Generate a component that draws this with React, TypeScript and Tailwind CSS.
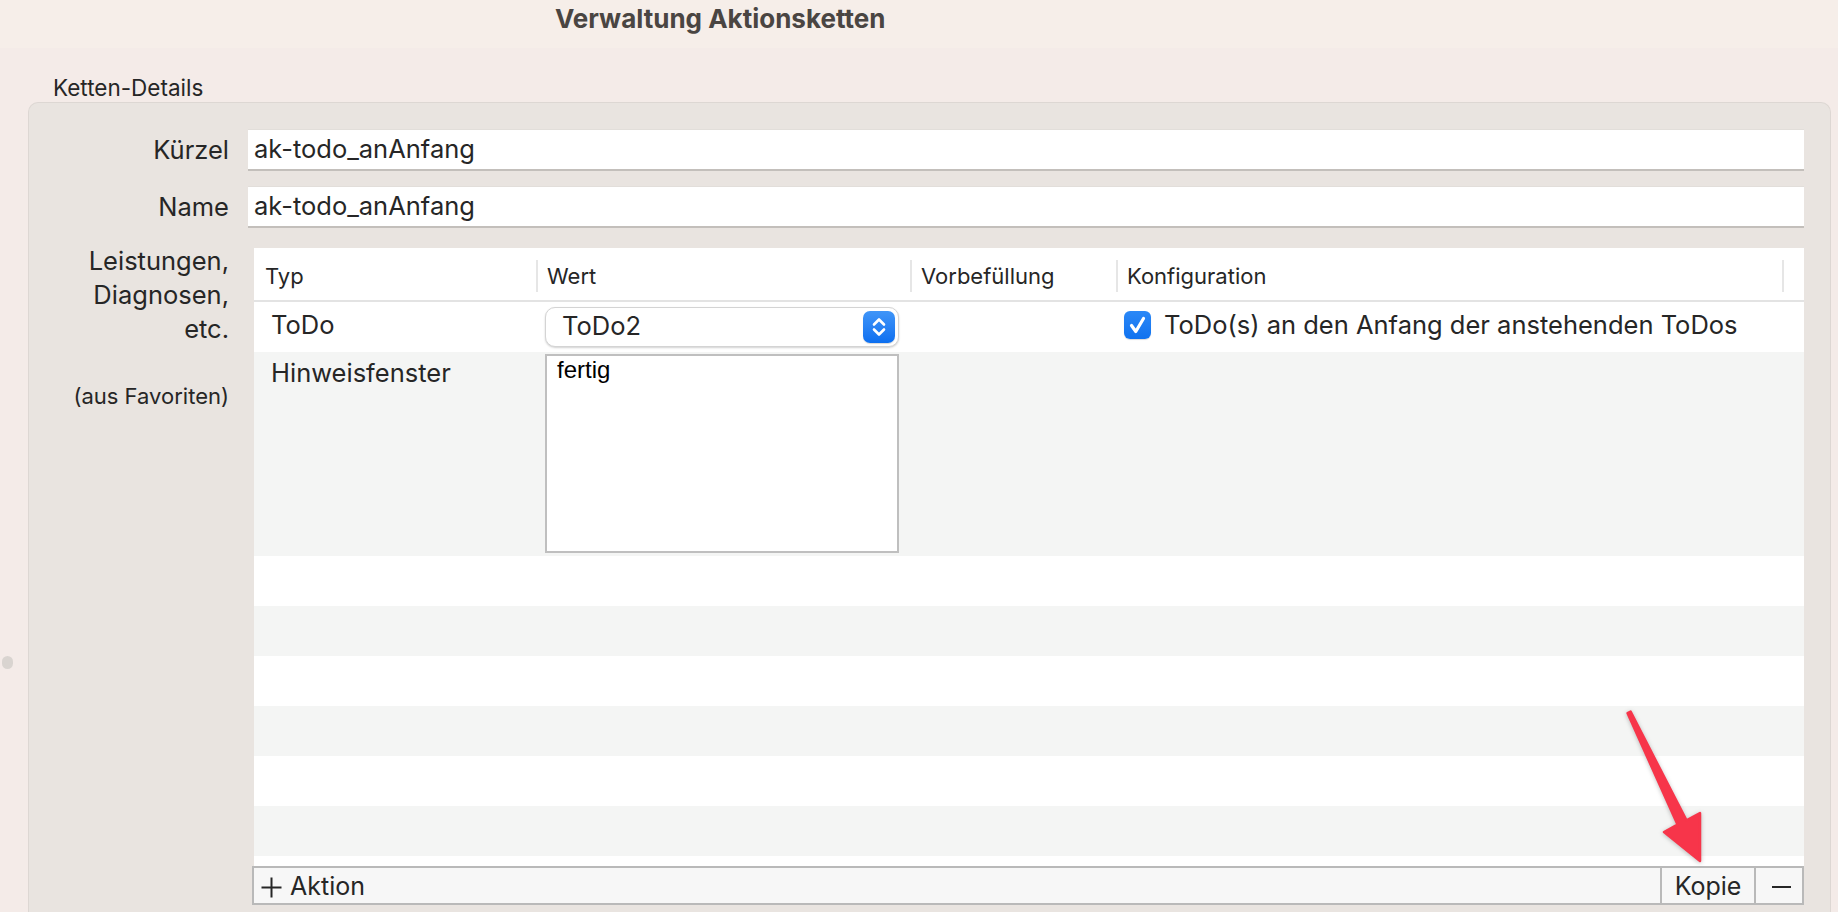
import React from "react";

function Sep() {
  return <div className="w-[2px] h-[32px] bg-[#e6e6e6] shrink-0" />;
}

function Stepper() {
  return (
    <div className="w-[32px] h-[32px] rounded-[7px] bg-gradient-to-b from-[#3f95f8] to-[#0b6ff0] flex items-center justify-center shadow-[0_1px_1px_rgba(0,0,0,0.15)]">
      <svg width="32" height="32" viewBox="0 0 32 32" fill="none">
        <path d="M11 13.5 L16 8.5 L21 13.5" stroke="white" strokeWidth="2.6" strokeLinecap="round" strokeLinejoin="round" />
        <path d="M11 18.5 L16 23.5 L21 18.5" stroke="white" strokeWidth="2.6" strokeLinecap="round" strokeLinejoin="round" />
      </svg>
    </div>
  );
}

function Checkbox() {
  return (
    <div className="w-[27px] h-[28px] rounded-[6px] bg-gradient-to-b from-[#2a88f7] to-[#0f72ef] flex items-center justify-center shrink-0 shadow-[0_1px_1px_rgba(0,0,0,0.15)]">
      <svg width="27" height="28" viewBox="0 0 27 28" fill="none">
        <path d="M7.5 14.5 L11.8 20.5 L19.5 7.5" stroke="white" strokeWidth="3.2" strokeLinecap="round" strokeLinejoin="round" />
      </svg>
    </div>
  );
}

export default function App() {
  const filler = [0, 1, 2, 3, 4, 5, 6];
  return (
    <div className="relative w-[1838px] h-[912px] overflow-hidden bg-[#f4ebe8] flex flex-col text-[#262626] font-['Inter','Noto_Sans',sans-serif]">
      {/* Title bar */}
      <div className="h-[48px] shrink-0 bg-[#f6eee9] flex items-start pt-[6px] pl-[555px]">
        <span className="text-[26px] leading-[26px] font-bold text-[#4a4542]">Verwaltung Aktionsketten</span>
      </div>

      {/* Group title */}
      <div className="shrink-0 mt-[27px] mb-[1px] pl-[53px] text-[22.5px] leading-[26px]">Ketten-Details</div>

      {/* Group box */}
      <div className="flex-1 min-h-0 ml-[28px] mr-[7px] rounded-t-[10px] bg-[#e9e4e0] border border-b-0 border-[#ddd7d3] flex flex-col pt-[26px] pb-[7px] pr-[26px]">
        <div className="flex items-center h-[42px] shrink-0">
          <div className="w-[200px] text-right text-[25.5px] leading-[30px]">Kürzel</div>
          <div className="ml-[19px] flex-1 h-[42px] bg-white border-t border-[#e2deda] border-b-2 border-b-[#c3bfbb] flex items-center pl-[6px] text-[25.5px]">ak-todo_anAnfang</div>
        </div>
        <div className="flex items-center h-[42px] mt-[15px] shrink-0">
          <div className="w-[200px] text-right text-[25.5px] leading-[30px]">Name</div>
          <div className="ml-[19px] flex-1 h-[42px] bg-white border-t border-[#e2deda] border-b-2 border-b-[#c3bfbb] flex items-center pl-[6px] text-[25.5px]">ak-todo_anAnfang</div>
        </div>

        <div className="flex mt-[20px] flex-1 min-h-0">
          <div className="w-[200px] shrink-0 text-right">
            <div className="mt-[-4px] text-[25.5px] leading-[34px]">
              Leistungen,
              <br />
              Diagnosen,
              <br />
              etc.
            </div>
            <div className="mt-[37px] text-[22px] leading-[26px]">(aus Favoriten)</div>
          </div>

          <div className="ml-[25px] flex-1 flex flex-col min-h-0">
            {/* Table */}
            <div className="flex-1 min-h-0 bg-white overflow-hidden flex flex-col">
              <div className="h-[54px] shrink-0 flex items-center pt-[4px] border-b-2 border-[#e3e3e3] text-[22px]">
                <div className="w-[282px] pl-[11px]">Typ</div>
                <div className="w-[374px] flex items-center">
                  <Sep />
                  <span className="pl-[9px]">Wert</span>
                </div>
                <div className="w-[206px] flex items-center">
                  <Sep />
                  <span className="pl-[9px]">Vorbefüllung</span>
                </div>
                <div className="w-[666px] flex items-center">
                  <Sep />
                  <span className="pl-[9px]">Konfiguration</span>
                </div>
                <div className="flex-1 flex items-center">
                  <Sep />
                </div>
              </div>

              {/* Row 1 */}
              <div className="h-[50px] shrink-0 flex items-center bg-white text-[25.5px]">
                <div className="w-[282px] pl-[17px] pb-[3px]">ToDo</div>
                <div className="w-[374px] pl-[9px]">
                  <div className="w-[354px] h-[40px] rounded-[10px] bg-white border border-[#d4d4d4] shadow-[0_1px_2px_rgba(0,0,0,0.18)] flex items-center justify-between pl-[16px] pr-[3px]">
                    <span className="pb-[2px]">ToDo2</span>
                    <Stepper />
                  </div>
                </div>
                <div className="w-[206px]" />
                <div className="flex-1 pl-[8px] flex items-center gap-[13px] pb-[4px]">
                  <Checkbox />
                  <span>ToDo(s) an den Anfang der anstehenden ToDos</span>
                </div>
              </div>

              {/* Row 2 */}
              <div className="h-[204px] shrink-0 flex bg-[#f4f5f4] text-[25.5px]">
                <div className="w-[282px] pl-[17px] pt-[6px] leading-[30px]">Hinweisfenster</div>
                <div className="w-[374px] pl-[9px] pt-[2px]">
                  <div className="w-[354px] h-[199px] bg-white border-2 border-[#bfbfbf] pl-[10px] text-[24px] leading-[28px] text-black font-['Liberation_Sans',Arial,sans-serif]">
                    fertig
                  </div>
                </div>
              </div>

              {filler.map((i) => (
                <div key={i} className={i % 2 === 0 ? "h-[50px] shrink-0 bg-white" : "h-[50px] shrink-0 bg-[#f4f5f4]"} />
              ))}
            </div>

            {/* Bottom bar */}
            <div className="h-[39px] shrink-0 ml-[-2px] flex border-2 border-[#b9b9b9] bg-[#f7f7f7] text-[25px]">
              <div className="flex-1 flex items-center pl-[7px] pt-[3px] gap-[8px]">
                <svg width="21" height="21" viewBox="0 0 21 21" fill="none">
                  <path d="M10.5 0.5 V20.5 M0.5 10.5 H20.5" stroke="#262626" strokeWidth="2" />
                </svg>
                <span>Aktion</span>
              </div>
              <div className="w-[96px] border-l-2 border-r-2 border-[#b9b9b9] flex items-center justify-center pt-[3px]">
                <span>Kopie</span>
              </div>
              <div className="w-[46px] flex items-center justify-center pl-[4px] pt-[3px]">
                <div className="w-[19px] h-[2px] bg-[#262626]" />
              </div>
            </div>
          </div>
        </div>
      </div>

      {/* Scroll knob */}
      <div className="absolute left-[2px] top-[656px] w-[11px] h-[13px] rounded-full bg-[#d9d4d0]" />

      {/* Red arrow annotation */}
      <svg className="absolute left-[1600px] top-[700px] drop-shadow-[0_1px_2px_rgba(0,0,0,0.25)]" width="120" height="180" viewBox="0 0 120 180">
        <polygon
          points="27.6,13.2 30.6,11.6 86.5,120.4 100,113 100,161 64,132 77.5,124.6"
          fill="#f7354a"
          stroke="#f7354a"
          strokeWidth="2.5"
          strokeLinejoin="round"
        />
      </svg>
    </div>
  );
}
